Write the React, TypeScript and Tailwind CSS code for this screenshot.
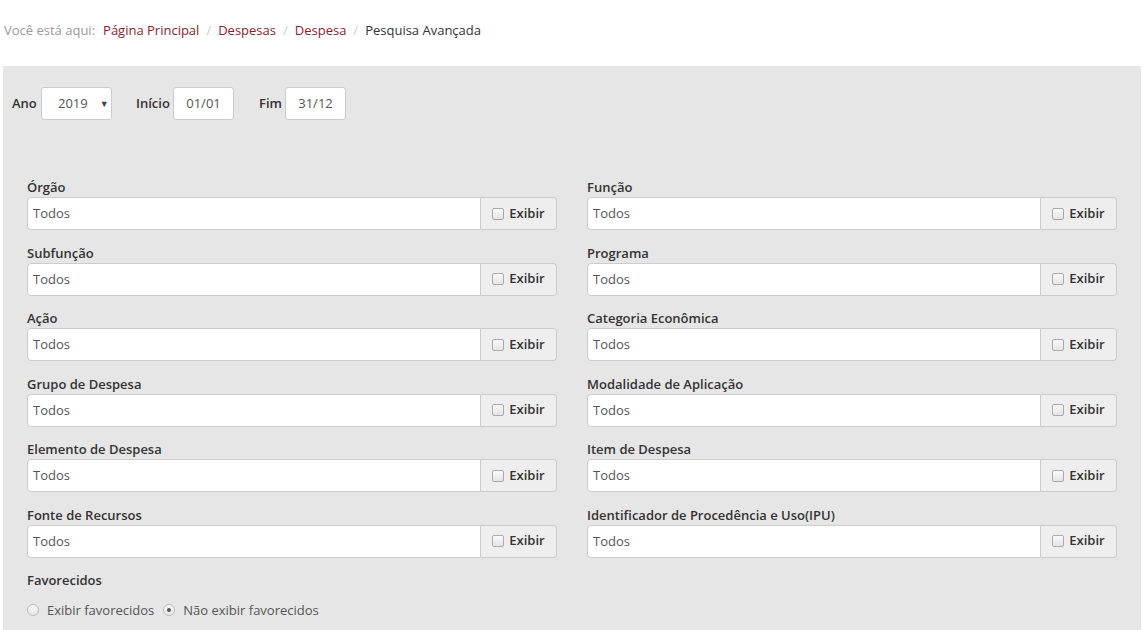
import React from "react";

const left = ["Órgão", "Subfunção", "Ação", "Grupo de Despesa", "Elemento de Despesa", "Fonte de Recursos"];
const right = ["Função", "Programa", "Categoria Econômica", "Modalidade de Aplicação", "Item de Despesa", "Identificador de Procedência e Uso(IPU)"];

function Field({ label }: { label: string }) {
  return (
    <div className="flex flex-col">
      <div className="h-[20px] leading-[20px] text-[13px] font-[550] text-[#333]">{label}</div>
      <div className="flex h-[33px]">
        <div className="flex-1 flex items-center bg-white border border-[#ccc] rounded-l-[4px] pl-[5px] pt-[1px] text-[13px] text-[#555]">
          Todos
        </div>
        <div className="w-[76px] flex items-center justify-center gap-[5px] bg-[#eee] border border-l-0 border-[#ccc] rounded-r-[4px] text-[13px] font-[550] text-[#333]">
          <span className="w-[12px] h-[12px] border border-[#aaa] rounded-[2px] bg-gradient-to-b from-[#fafafa] to-[#e4e4e4]"></span>
          Exibir
        </div>
      </div>
    </div>
  );
}

export default function App() {
  const rows = left.map((l, i) => [l, right[i]]);
  return (
    <div className="w-[1143px] h-[630px] overflow-hidden bg-white text-[#333]" style={{ fontFamily: '"Open Sans", "Noto Sans", sans-serif' }}>
      <div className="h-[66px] flex items-start pt-[21px] pl-[4px] text-[13px]">
        <span className="text-[#999]">Você está aqui:</span>
        <span className="text-[#8b1c2c] ml-[8px]">Página Principal</span>
        <span className="text-[#ccc] mx-[7px]">/</span>
        <span className="text-[#8b1c2c]">Despesas</span>
        <span className="text-[#ccc] mx-[7px]">/</span>
        <span className="text-[#8b1c2c]">Despesa</span>
        <span className="text-[#ccc] mx-[7px]">/</span>
        <span className="text-[#333]">Pesquisa Avançada</span>
      </div>
      <div className="ml-[3px] w-[1138px] h-[564px] bg-[#e7e6e6]">
        <div className="flex items-center pt-[21px] pl-[9px] text-[13px]">
          <span className="w-[29px] font-semibold">Ano</span>
          <div className="w-[71px] h-[33px] bg-white border border-[#ccc] rounded-[3px] flex items-center pl-[16px] text-[#555]">
            <span>2019</span>
            <span className="ml-[12px] text-[9px] text-[#444]">▼</span>
          </div>
          <span className="ml-[24px] w-[37px] font-semibold">Início</span>
          <div className="w-[61px] h-[33px] bg-white border border-[#ccc] rounded-[3px] flex items-center justify-center text-[#555]">01/01</div>
          <span className="ml-[25px] w-[26px] font-semibold">Fim</span>
          <div className="w-[61px] h-[33px] bg-white border border-[#ccc] rounded-[3px] flex items-center justify-center text-[#555]">31/12</div>
        </div>
        <div className="px-[24px] pt-[57px] grid grid-cols-2 gap-x-[30px] gap-y-[12.5px]">
          {rows.map(([l, r]) => (
            <React.Fragment key={l}>
              <Field label={l} />
              <Field label={r} />
            </React.Fragment>
          ))}
        </div>
        <div className="px-[24px] pt-[12px] text-[13px]">
          <div className="h-[20px] leading-[20px] font-[550]">Favorecidos</div>
          <div className="flex items-center mt-[11px] text-[#555]">
            <span className="w-[12px] h-[12px] rounded-full border border-[#bbb] bg-gradient-to-b from-[#fafafa] to-[#e6e6e6]"></span>
            <span className="ml-[8px]">Exibir favorecidos</span>
            <span className="ml-[9px] w-[12px] h-[12px] rounded-full border border-[#bbb] bg-gradient-to-b from-[#fafafa] to-[#e6e6e6] flex items-center justify-center">
              <span className="w-[4px] h-[4px] rounded-full bg-[#555]"></span>
            </span>
            <span className="ml-[8px]">Não exibir favorecidos</span>
          </div>
        </div>
      </div>
    </div>
  );
}
